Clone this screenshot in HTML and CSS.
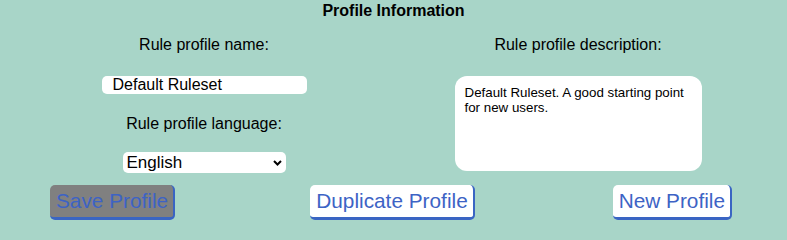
FILE: index.html
```html
<!DOCTYPE html>
<html lang="en">
<head>
<meta charset="utf-8">
<title>Profile Information</title>
<link rel="stylesheet" href="styles.css">
</head>
<body>
<div class="panel">
  <h2 class="title">Profile Information</h2>
  <div class="fields">
    <div class="col">
      <label class="label" for="pname">Rule profile name:</label>
      <input class="name-input" id="pname" type="text" value="Default Ruleset">
      <label class="label lang-label" for="plang">Rule profile language:</label>
      <div class="select-wrap">
        <select class="lang-select" id="plang">
          <option>English</option>
        </select>
        <svg class="chev" width="9" height="6" viewBox="0 0 9 6"><path d="M1 1 L4.5 4.5 L8 1" fill="none" stroke="#000" stroke-width="2"/></svg>
      </div>
    </div>
    <div class="col">
      <label class="label" for="pdesc">Rule profile description:</label>
      <textarea class="desc" id="pdesc">Default Ruleset. A good starting point for new users.</textarea>
    </div>
  </div>
  <div class="actions">
    <button class="btn btn-save">Save Profile</button>
    <button class="btn btn-dup">Duplicate Profile</button>
    <button class="btn btn-new">New Profile</button>
  </div>
</div>
</body>
</html>
```
FILE: styles.css
```css
html, body {
  margin: 0;
  padding: 0;
  background: #a8d5c8;
}
body {
  font-family: "Liberation Sans", Arial, sans-serif;
  color: #000;
}
.panel {
  width: 787px;
  height: 232px;
  box-sizing: border-box;
  overflow: hidden;
}
.title {
  margin: 0;
  padding-top: 2px;
  font-size: 16px;
  line-height: 18px;
  font-weight: bold;
  text-align: center;
}
.fields {
  display: grid;
  grid-template-columns: 374px 374px;
  padding-left: 17px;
  padding-top: 16px;
}
.col {
  display: flex;
  flex-direction: column;
  align-items: center;
}
.label {
  display: block;
  font-size: 16px;
  line-height: 18px;
  text-align: center;
}
.name-input {
  margin-top: 22px;
  width: 205px;
  height: 18px;
  box-sizing: border-box;
  border: none;
  border-radius: 5px;
  padding: 0 0 0 11px;
  font-family: "Liberation Sans", Arial, sans-serif;
  font-size: 16px;
  background: #fff;
  color: #000;
  outline: none;
}
.lang-label {
  margin-top: 21px;
}
.select-wrap {
  position: relative;
  margin-top: 19px;
  width: 163px;
  height: 21px;
}
.lang-select {
  appearance: none;
  -webkit-appearance: none;
  width: 163px;
  height: 21px;
  box-sizing: border-box;
  border: none;
  border-radius: 5px;
  background: #fff;
  padding: 0 0 0 4px;
  font-family: "Liberation Sans", Arial, sans-serif;
  font-size: 17px;
  color: #000;
  outline: none;
}
.chev {
  position: absolute;
  right: 4px;
  top: 8px;
  pointer-events: none;
}
.desc {
  margin-top: 22px;
  width: 247px;
  height: 95px;
  box-sizing: border-box;
  border: none;
  border-radius: 12px;
  padding: 9px 10px;
  resize: none;
  font-family: "Liberation Sans", Arial, sans-serif;
  font-size: 13.33px;
  line-height: 15px;
  color: #000;
  background: #fff;
  outline: none;
}
.actions {
  display: grid;
  grid-template-columns: 1fr 1fr 1fr;
  padding: 0 55px 0 50px;
  margin-top: 12px;
}
.btn {
  font-family: "Liberation Sans", Arial, sans-serif;
  font-size: 20.8px;
  line-height: 24px;
  color: #3d63c5;
  background: #fff;
  border: none;
  border-right: 2px solid #3a65c3;
  border-bottom: 3px solid #3a65c3;
  border-radius: 5px;
  padding: 4px 5px 4px 6px;
  cursor: pointer;
}
.btn-save {
  justify-self: start;
  background: #808080;
}
.btn-dup {
  justify-self: center;
  margin-left: 3px;
}
.btn-new {
  justify-self: end;
}
```
